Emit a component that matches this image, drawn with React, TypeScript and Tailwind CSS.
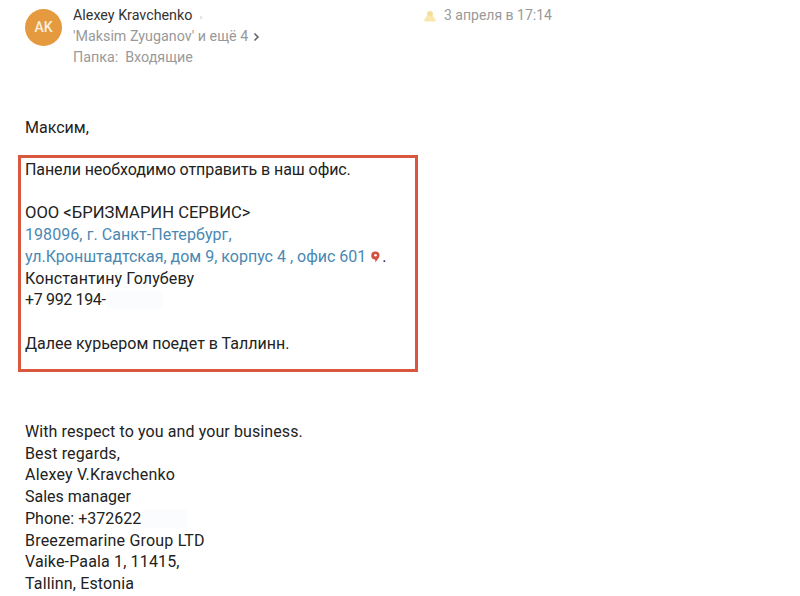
import React from "react";

function Line({ children, className = "" }: { children?: React.ReactNode; className?: string }) {
  return <div className={`h-[21.75px] whitespace-nowrap leading-[21.75px] ${className}`}>{children}</div>;
}

export default function App() {
  return (
    <div className="h-[596px] w-[800px] overflow-hidden bg-white font-['Roboto',sans-serif] text-[16px] text-[#222]">
      <header className="flex items-start pl-[25px] pt-[5px]">
        <div className="mt-[4px] flex h-[37px] w-[37px] shrink-0 items-center justify-center rounded-full bg-[#e59a3f] text-[14px] font-medium text-[#fbeedd]">
          AK
        </div>
        <div className="ml-[11px] w-[350px] text-[14.3px] leading-[21px]">
          <div className="flex items-center text-[#333]">
            Alexey Kravchenko
            <span className="ml-[8px] mt-[3px] h-[3px] w-[2px] bg-[#e4e4e4]" />
          </div>
          <div className="flex items-center text-[#999]">
            'Maksim Zyuganov' и ещё 4
            <svg className="ml-[5px]" width="7" height="10" viewBox="0 0 7 10" fill="none">
              <path d="M1.500 1.500 5 5 1.500 8.500" stroke="#666" strokeWidth="1.600" />
            </svg>
          </div>
          <div className="text-[#9a9a9a]">
            Папка:<span className="ml-[7px]">Входящие</span>
          </div>
        </div>
        <div className="ml-[-1px] flex items-center text-[14px] leading-[21px] text-[#999]">
          <svg width="16" height="14" viewBox="0 0 16 14" className="mr-[6px] mt-[1px]">
            <circle cx="8" cy="5" r="3" fill="#f7df9a" />
            <path d="M2 11 5 7h6l3 4-1 1.500H3z" fill="#f9e7ae" />
          </svg>
          3 апреля в 17:14
        </div>
      </header>

      <main className="pl-[25px] pt-[49px]">
        <Line>Максим,</Line>

        <section className="mt-[16px] ml-[-7px] flex h-[217px] w-[400px] flex-col border-[3px] border-[#d9573f] pl-[4px] pt-[1px]">
          <Line className="tracking-[-0.08px]">Панели необходимо отправить в наш офис.</Line>
          <Line />
          <Line className="text-[16.6px]">ООО &lt;БРИЗМАРИН СЕРВИС&gt;</Line>
          <Line className="tracking-[0.07px]"><span className="text-[#4a88b2]">198096, г. Санкт-Петербург,</span></Line>
          <Line>
            <span className="inline-flex items-center">
              <span className="text-[#4a88b2]">ул.Кронштадтская, дом 9, корпус 4 , офис 601</span>
              <svg width="9" height="12" viewBox="0 0 9 12" className="ml-[5px]">
                <path d="M4.500.5a4 4 0 0 1 4 4C8.500 7 6 8.500 4.500 11.500 4.500 9.500 4 8.500 4 8.500A4 4 0 0 1 4.500.5z" fill="#d2503f" />
                <circle cx="4.500" cy="4.300" r="1.300" fill="#fff" />
              </svg>
              <span className="ml-[2px]">.</span>
            </span>
          </Line>
          <Line className="tracking-[0.1px]">Константину Голубеву</Line>
          <Line>
            <span className="inline-flex items-center tracking-[-0.35px]">
              +7 992 194-
              <span className="ml-[1px] h-[18px] w-[55px] bg-[#fbfcfe]" />
            </span>
          </Line>
          <Line />
          <Line>Далее курьером поедет в Таллинн.</Line>
        </section>

        <div className="mt-[49px]">
          <Line className="tracking-[0.1px]">With respect to you and your business.</Line>
          <Line className="tracking-[0.15px]">Best regards,</Line>
          <Line className="tracking-[0.2px]">Alexey V.Kravchenko</Line>
          <Line>Sales manager</Line>
          <Line>
            <span className="inline-flex items-center">
              Phone: +372622
              <span className="ml-[1px] h-[18px] w-[45px] bg-[#fbfcfe]" />
            </span>
          </Line>
          <Line className="tracking-[0.2px]">Breezemarine Group LTD</Line>
          <Line className="tracking-[0.15px]">Vaike-Paala 1, 11415,</Line>
          <Line className="tracking-[0.15px]">Tallinn, Estonia</Line>
        </div>
      </main>
    </div>
  );
}
